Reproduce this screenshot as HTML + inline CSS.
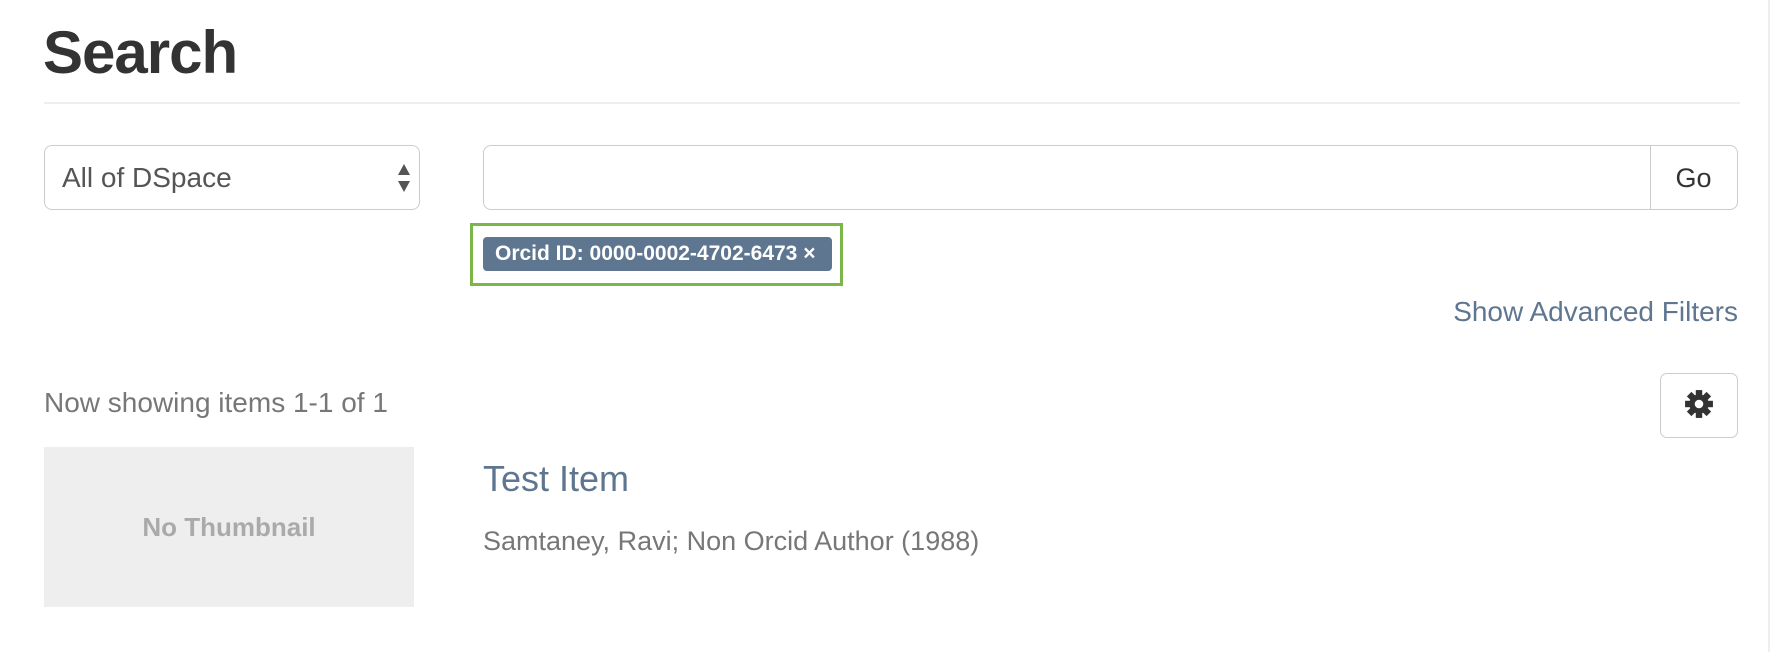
<!DOCTYPE html>
<html><head><meta charset="utf-8"><style>
body{margin:0;width:1772px;height:652px;background:#fff;font-family:"Liberation Sans",Arial,sans-serif;position:relative;overflow:hidden;color:#333}
.a{position:absolute}
</style></head><body>
<div class="a" style="left:43px;top:16px;font-size:60px;font-weight:bold;letter-spacing:-1px;color:#333;line-height:74px">Search</div>
<div class="a" style="left:44px;top:102px;width:1696px;height:2px;background:#eee"></div>
<div class="a" style="left:44px;top:145px;width:374px;height:63px;border:1px solid #ccc;border-radius:8px;box-sizing:content-box"></div>
<div class="a" style="left:62px;top:162px;font-size:28px;color:#555;line-height:32px">All of DSpace</div>
<svg class="a" style="left:397px;top:163px" width="14" height="30"><path d="M7 1L13 12H1Z M7 29L13 18H1Z" fill="#555"/></svg>
<div class="a" style="left:483px;top:145px;width:1253px;height:63px;border:1px solid #ccc;border-radius:8px"></div>
<div class="a" style="left:1650px;top:145px;width:1px;height:65px;background:#ccc"></div>
<div class="a" style="left:1650px;top:161px;width:87px;text-align:center;font-size:27px;color:#333;line-height:34px">Go</div>
<div class="a" style="left:470px;top:223px;width:373px;height:63px;border:3px solid #7ab648;box-sizing:border-box"></div>
<div class="a" style="left:483px;top:237px;width:349px;height:34px;background:#5f7690;border-radius:4px;color:#fff;font-weight:bold;font-size:21px;line-height:34px;text-align:left;padding-left:12px;box-sizing:border-box;white-space:nowrap;letter-spacing:0px">Orcid ID: 0000-0002-4702-6473 ×</div>
<div class="a" style="right:34px;top:296px;font-size:28px;color:#5f7690;line-height:32px">Show Advanced Filters</div>
<div class="a" style="left:44px;top:387px;font-size:28px;color:#777;line-height:32px">Now showing items 1-1 of 1</div>
<div class="a" style="left:1660px;top:373px;width:78px;height:65px;border:1px solid #ccc;border-radius:7px;box-sizing:border-box"></div>
<svg class="a" style="left:1684px;top:389px" width="30" height="30" viewBox="0 0 28 28"><g fill="#333" transform="translate(14 14)"><circle r="9"/><g id="t"><rect x="-3" y="-13" width="6" height="6"/><rect x="-3" y="7" width="6" height="6"/></g><use href="#t" transform="rotate(45)"/><use href="#t" transform="rotate(90)"/><use href="#t" transform="rotate(135)"/></g><circle cx="14" cy="14" r="4" fill="#fff"/></svg>
<div class="a" style="left:44px;top:447px;width:370px;height:160px;background:#eee;color:#aaa;font-weight:bold;font-size:26px;line-height:160px;text-align:center">No Thumbnail</div>
<div class="a" style="left:483px;top:458px;font-size:36px;color:#5f7690;line-height:42px">Test Item</div>
<div class="a" style="left:483px;top:525px;font-size:27px;color:#777;line-height:32px">Samtaney, Ravi; Non Orcid Author (1988)</div>
<div class="a" style="left:1768px;top:0;width:2px;height:652px;background:#eee"></div>
</body></html>
